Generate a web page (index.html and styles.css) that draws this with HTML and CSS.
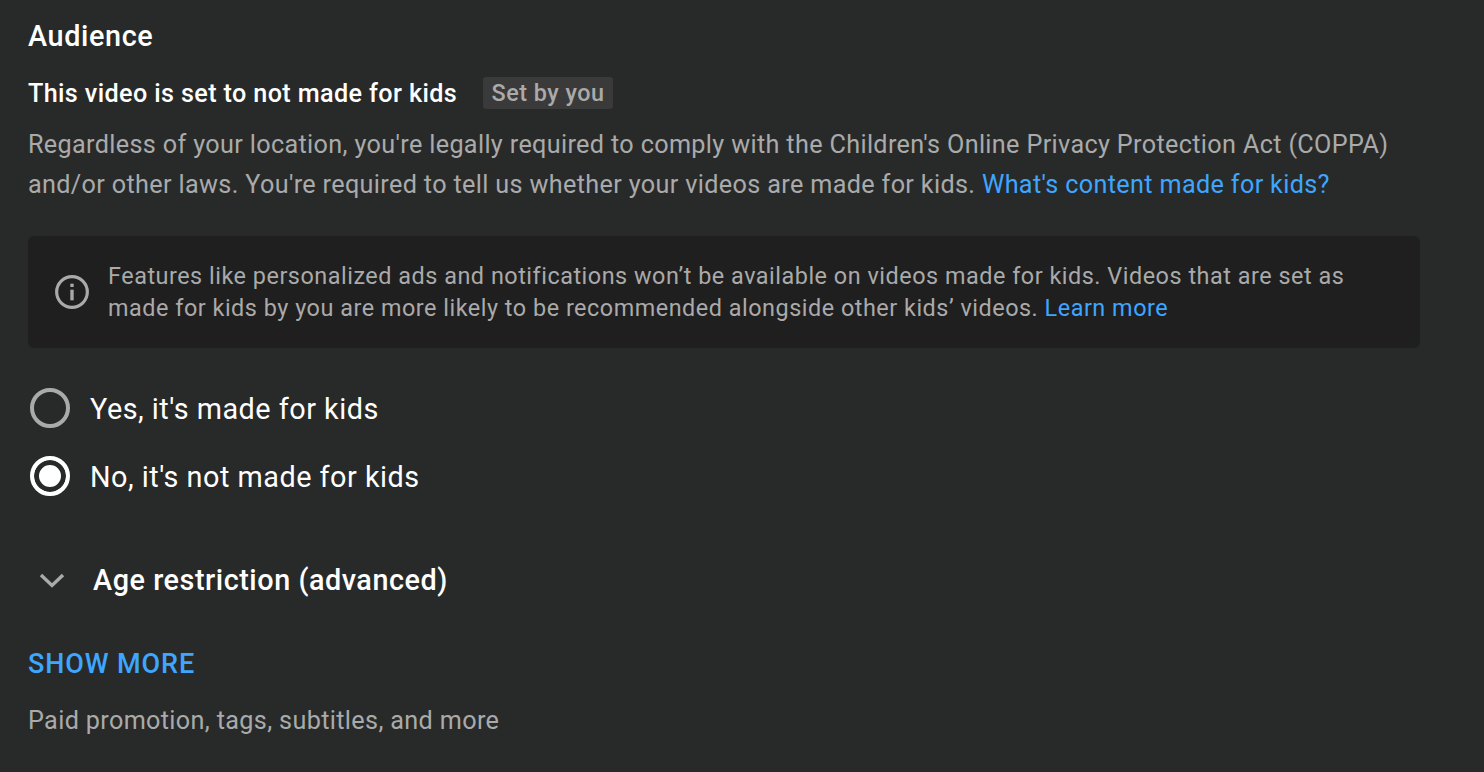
FILE: index.html
```html
<!DOCTYPE html>
<html lang="en">
<head>
    <meta charset="UTF-8">
    <meta name="viewport" content="width=device-width, initial-scale=1.0">
    <title>Audience</title>
    <link rel="stylesheet" href="styles.css">
</head>
<body>
    <div class="section">
        <h2 class="title">Audience</h2>
        <div class="status">
            <span class="status-text">This video is set to not made for kids</span>
            <span class="badge">Set by you</span>
        </div>
        <p class="description">Regardless of your location, you're legally required to comply with the Children's Online Privacy Protection Act (COPPA) and/or other laws. You're required to tell us whether your videos are made for kids. <a class="link" href="#">What's content made for kids?</a></p>

        <div class="notice">
            <svg class="notice-icon" viewBox="0 0 24 24" width="40" height="40">
                <circle cx="12" cy="12" r="9.2" fill="none" stroke="currentColor" stroke-width="1.9"/>
                <rect x="11" y="10.6" width="2" height="6.4" fill="currentColor"/>
                <rect x="11" y="7" width="2" height="2" fill="currentColor"/>
            </svg>
            <p class="notice-text">Features like personalized ads and notifications won’t be available on videos made for kids. Videos that are set as made for kids by you are more likely to be recommended alongside other kids’ videos. <a class="link" href="#">Learn more</a></p>
        </div>

        <div class="radios">
            <div class="radio-row">
                <span class="radio"></span>
                <span class="radio-label">Yes, it's made for kids</span>
            </div>
            <div class="radio-row">
                <span class="radio checked"></span>
                <span class="radio-label">No, it's not made for kids</span>
            </div>
        </div>

        <div class="expander">
            <svg class="chevron" viewBox="0 0 26 15" width="26" height="15">
                <path d="M2 2 L13 12.5 L24 2" fill="none" stroke="currentColor" stroke-width="3.4"/>
            </svg>
            <span class="expander-label">Age restriction (advanced)</span>
        </div>

        <a class="show-more" href="#">SHOW MORE</a>
        <p class="more-hint">Paid promotion, tags, subtitles, and more</p>
    </div>
</body>
</html>
```

FILE: styles.css
```css
body {
    font-family: Roboto, "Liberation Sans", sans-serif;
    background-color: #282a2a;
    color: #fff;
    margin: 0;
    overflow: hidden;
}

.section {
    width: 1392px;
    padding: 18px 0 0 28px;
}

.title {
    font-size: 28.8px;
    font-weight: 500;
    letter-spacing: 0.62px;
    line-height: 36px;
    margin: 0;
}

.status {
    display: flex;
    align-items: center;
    margin-top: 23px;
    height: 32px;
}

.status-text {
    font-size: 25.2px;
    font-weight: 500;
    letter-spacing: 0.37px;
}

.badge {
    margin-left: 26px;
    padding: 0 8.5px;
    height: 32px;
    line-height: 32px;
    font-size: 23.4px;
    font-weight: 500;
    letter-spacing: 0.47px;
    color: #aaa;
    background-color: #3a3a3a;
    border-radius: 3px;
}

.description {
    font-size: 25.2px;
    letter-spacing: 0.35px;
    line-height: 40px;
    color: #aaa;
    margin: 16px 0 0;
}

.link {
    color: #3ea6ff;
    text-decoration: none;
}

.notice {
    display: flex;
    align-items: center;
    margin-top: 31px;
    height: 112px;
    box-sizing: border-box;
    padding: 0 24px;
    background-color: #1f1f1f;
    border-radius: 6px;
}

.notice-icon {
    color: #aaa;
    flex-shrink: 0;
}

.notice-text {
    font-size: 23.4px;
    letter-spacing: 0.52px;
    line-height: 32px;
    color: #aaa;
    margin: 0 0 0 16px;
}

.radios {
    margin-top: 27px;
}

.radio-row {
    display: flex;
    align-items: center;
    height: 68px;
}

.radio {
    box-sizing: border-box;
    width: 40px;
    height: 40px;
    margin: 0 0 2px 2px;
    border: 4px solid #aaa;
    border-radius: 50%;
}

.radio.checked {
    border-color: #fff;
    background-color: #fff;
    box-shadow: inset 0 0 0 5px #282a2a;
}

.radio-label {
    font-size: 28.8px;
    letter-spacing: 0.5px;
    margin-left: 20px;
}

.expander {
    display: flex;
    align-items: center;
    margin-top: 52px;
}

.chevron {
    color: #aaa;
    margin-left: 11px;
}

.expander-label {
    font-size: 28.8px;
    font-weight: 500;
    letter-spacing: 0.54px;
    margin-left: 28px;
}

.show-more {
    display: block;
    margin-top: 51px;
    font-size: 27px;
    font-weight: 500;
    letter-spacing: 0.9px;
    color: #3ea6ff;
    text-decoration: none;
}

.more-hint {
    font-size: 25.2px;
    letter-spacing: 0.35px;
    color: #aaa;
    margin: 26px 0 0;
}
```
